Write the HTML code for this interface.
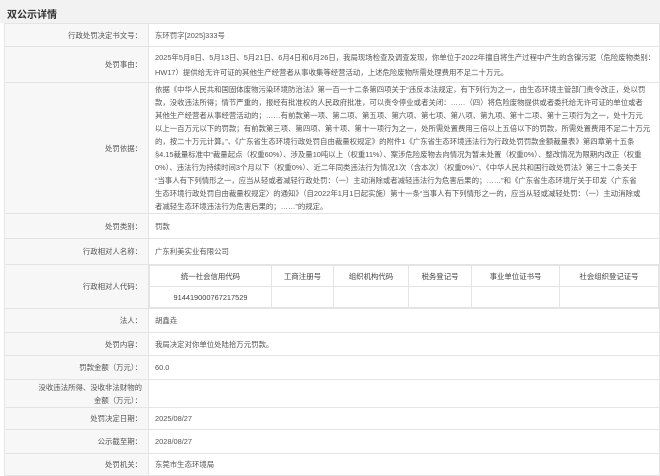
<!DOCTYPE html>
<html><head><meta charset="utf-8"><style>
*{margin:0;padding:0;box-sizing:border-box}
body{width:660px;height:476px;overflow:hidden;background:#fff;font-family:"Liberation Sans","Noto Sans CJK SC",sans-serif;font-size:7.4px;color:#444;position:relative}
.hd{height:23px;background:#f2f2f2;font-size:10px;font-weight:bold;color:#333;padding:6px 0 0 7px}
table.m{position:absolute;left:4px;top:23px;width:656px;border-collapse:collapse;table-layout:fixed}
table.m td{border:1px solid #e4e4e4;vertical-align:middle;overflow:hidden}
td.l{background:#f7f7f7;text-align:right;padding-right:6px;color:#555;line-height:13px}
td.v{padding-left:6px;line-height:13px;white-space:nowrap;color:#555}
table.i{width:100%;border-collapse:collapse;table-layout:fixed}
table.i td{border:1px solid #e4e4e4;text-align:center;height:21px}
</style></head><body>
<div class="hd">双公示详情</div>
<table class="m">
<colgroup><col style="width:144px"><col></colgroup>
<tr style="height:23px"><td class="l">行政处罚决定书文号：</td><td class="v">东环罚字[2025]333号</td></tr>
<tr style="height:36px"><td class="l">处罚事由：</td><td class="v" style="line-height:15px">2025年5月8日、5月13日、5月21日、6月4日和6月26日，我局现场检查及调查发现，你单位于2022年擅自将生产过程中产生的含镍污泥（危险废物类别：<br>HW17）提供给无许可证的其他生产经营者从事收集等经营活动，上述危险废物所需处理费用不足二十万元。</td></tr>
<tr style="height:130px"><td class="l">处罚依据：</td><td class="v">依据《中华人民共和国固体废物污染环境防治法》第一百一十二条第四项关于“违反本法规定，有下列行为之一，由生态环境主管部门责令改正，处以罚<br>款，没收违法所得；情节严重的，报经有批准权的人民政府批准，可以责令停业或者关闭：……（四）将危险废物提供或者委托给无许可证的单位或者<br>其他生产经营者从事经营活动的；……有前款第一项、第二项、第五项、第六项、第七项、第八项、第九项、第十二项、第十三项行为之一，处十万元<br>以上一百万元以下的罚款；有前款第三项、第四项、第十项、第十一项行为之一，处所需处置费用三倍以上五倍以下的罚款，所需处置费用不足二十万元<br>的，按二十万元计算。”、《广东省生态环境行政处罚自由裁量权规定》的附件1《广东省生态环境违法行为行政处罚罚款金额裁量表》第四章第十五条<br>§4.15裁量标准中“裁量起点（权重60%）、涉及量10吨以上（权重11%）、案涉危险废物去向情况为暂未处置（权重0%）、整改情况为限期内改正（权重<br>0%）、违法行为持续时间3个月以下（权重0%）、近二年同类违法行为情况1次（含本次）（权重0%）”、《中华人民共和国行政处罚法》第三十二条关于<br>“当事人有下列情形之一，应当从轻或者减轻行政处罚：（一）主动消除或者减轻违法行为危害后果的；……”和《广东省生态环境厅关于印发〈广东省<br>生态环境行政处罚自由裁量权规定〉的通知》（自2022年1月1日起实施）第十一条“当事人有下列情形之一的，应当从轻或减轻处罚：（一）主动消除或<br>者减轻生态环境违法行为危害后果的；……”的规定。</td></tr>
<tr style="height:25px"><td class="l">处罚类别：</td><td class="v">罚款</td></tr>
<tr style="height:26px"><td class="l">行政相对人名称：</td><td class="v">广东利美实业有限公司</td></tr>
<tr style="height:44px"><td class="l">行政相对人代码：</td><td style="padding:0"><table class="i"><colgroup><col style="width:122px"><col style="width:62px"><col style="width:75px"><col style="width:63px"><col style="width:88px"><col></colgroup><tr><td>统一社会信用代码</td><td>工商注册号</td><td>组织机构代码</td><td>税务登记号</td><td>事业单位证书号</td><td>社会组织登记证号</td></tr><tr><td>914419000767217529</td><td></td><td></td><td></td><td></td><td></td></tr></table></td></tr>
<tr style="height:24px"><td class="l">法人：</td><td class="v">胡鑫垚</td></tr>
<tr style="height:23px"><td class="l">处罚内容：</td><td class="v">我局决定对你单位处陆拾万元罚款。</td></tr>
<tr style="height:24px"><td class="l">罚款金额（万元）：</td><td class="v">60.0</td></tr>
<tr style="height:28px"><td class="l">没收违法所得、没收非法财物的<br>金额（万元）：</td><td class="v"></td></tr>
<tr style="height:22px"><td class="l">处罚决定日期：</td><td class="v">2025/08/27</td></tr>
<tr style="height:24px"><td class="l">公示截至期：</td><td class="v">2028/08/27</td></tr>
<tr style="height:22px"><td class="l">处罚机关：</td><td class="v">东莞市生态环境局</td></tr>
</table>
</body></html>
